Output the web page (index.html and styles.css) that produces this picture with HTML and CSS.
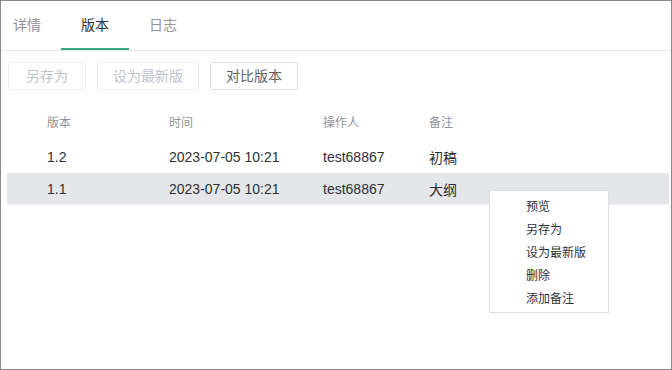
FILE: index.html
```html
<!DOCTYPE html>
<html lang="zh-CN">
<head>
<meta charset="utf-8">
<title>版本</title>
<link rel="stylesheet" href="styles.css">
</head>
<body>
<div class="frame">
  <div class="tabs">
    <div class="tab">详情</div>
    <div class="tab active">版本</div>
    <div class="tab">日志</div>
  </div>
  <div class="toolbar">
    <button class="btn btn-wide" disabled>另存为</button>
    <button class="btn" disabled>设为最新版</button>
    <button class="btn">对比版本</button>
  </div>
  <div class="table">
    <div class="row head">
      <div>版本</div><div>时间</div><div>操作人</div><div>备注</div>
    </div>
    <div class="row">
      <div>1.2</div><div>2023-07-05 10:21</div><div>test68867</div><div>初稿</div>
    </div>
    <div class="row selected">
      <div>1.1</div><div>2023-07-05 10:21</div><div>test68867</div><div>大纲</div>
    </div>
  </div>
  <ul class="menu">
    <li>预览</li>
    <li>另存为</li>
    <li>设为最新版</li>
    <li>删除</li>
    <li>添加备注</li>
  </ul>
</div>
</body>
</html>
```
FILE: styles.css
```css
html, body {
  margin: 0;
  padding: 0;
  background: #ffffff;
}
body {
  font-family: "Liberation Sans", "Noto Sans CJK SC", sans-serif;
  color: #303133;
}
.frame {
  position: relative;
  width: 672px;
  height: 370px;
  box-sizing: border-box;
  border: 1px solid #8a8a8a;
  background: #fff;
}
.tabs {
  display: flex;
  height: 49px;
  padding-left: 12px;
  border-bottom: 1px solid #e4e7ed;
}
.tab {
  position: relative;
  padding: 0 20px;
  font-size: 14px;
  line-height: 48px;
  color: #909399;
}
.tab:first-child {
  padding-left: 0;
}
.tab.active {
  color: #303133;
}
.tab.active::after {
  content: "";
  position: absolute;
  left: 0;
  right: 0;
  bottom: 0;
  height: 2px;
  background: #36a879;
}
.toolbar {
  display: flex;
  gap: 11px;
  padding: 11px 0 0 7px;
}
.btn {
  height: 28px;
  box-sizing: border-box;
  padding: 0 15px;
  border: 1px solid #dcdfe6;
  border-radius: 3px;
  background: #fff;
  font-family: inherit;
  font-size: 14px;
  color: #606266;
  line-height: 26px;
}
.btn:disabled {
  color: #c0c4cc;
  border-color: #ebeef5;
}
.btn-wide {
  min-width: 78px;
}
.table {
  margin: 11px 2px 0 6px;
}
.row {
  display: grid;
  grid-template-columns: 122px 154px 106px 1fr;
  padding-left: 40px;
  height: 32px;
  align-items: center;
  font-size: 14px;
  color: #303133;
}
.row.head {
  height: 40px;
  font-size: 12px;
  color: #909399;
}
.row.selected {
  background: #e5e6ea;
  box-shadow: inset 0 -1px 0 #eceef2;
}
.menu {
  position: absolute;
  left: 488px;
  top: 189px;
  width: 118px;
  margin: 0;
  padding: 5px 0 1px;
  list-style: none;
  background: #fff;
  border: 1px solid #dcdfe6;
}
.menu li {
  padding-left: 36px;
  font-size: 12px;
  line-height: 23px;
  color: #303133;
}
```
